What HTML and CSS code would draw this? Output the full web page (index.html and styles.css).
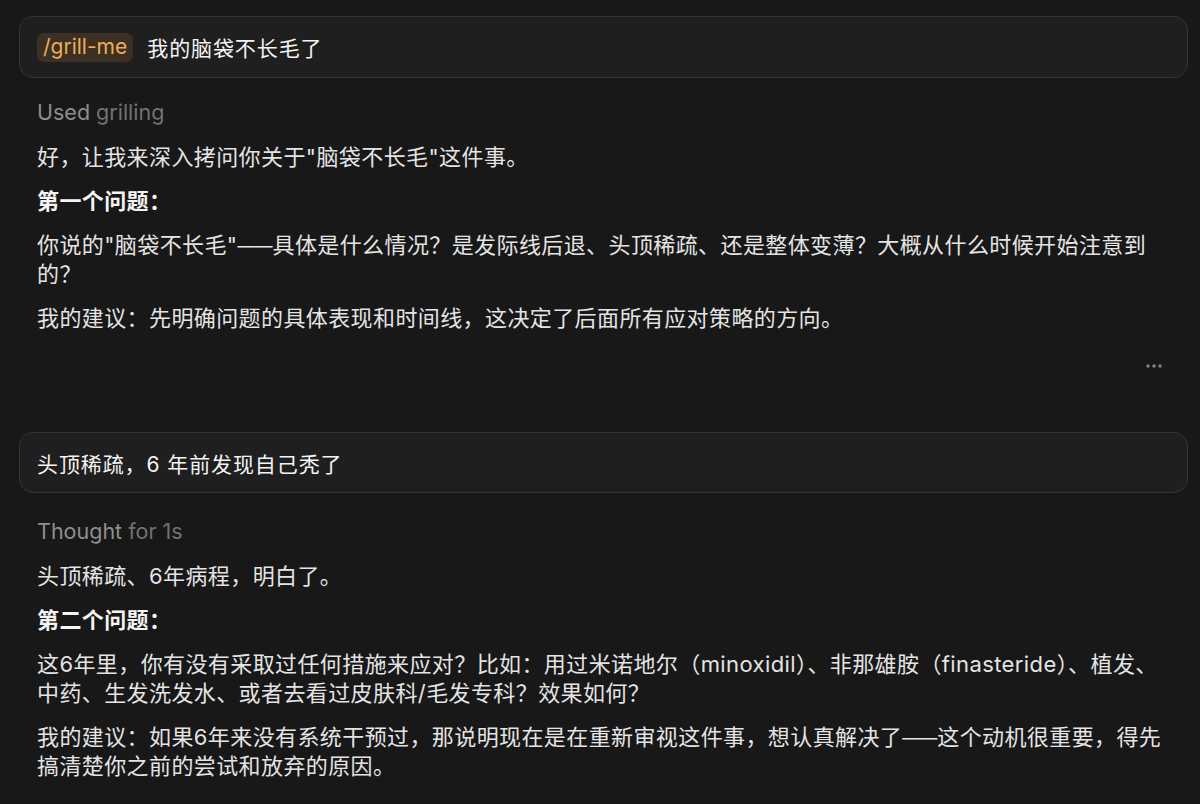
FILE: index.html
```html
<!DOCTYPE html>
<html lang="zh-CN">
<head>
  <meta charset="UTF-8">
  <meta name="viewport" content="width=device-width, initial-scale=1.0">
  <title>grill-me</title>
  <link rel="stylesheet" href="styles.css">
</head>
<body>
  <div class="thread">
    <!-- User turn -->
    <div class="user-msg">
      <span class="command-tag">/grill-me</span>
      <span class="user-text">我的脑袋不长毛了</span>
    </div>

    <!-- Assistant turn -->
    <div class="assistant-msg">
      <div class="status-line"><span class="status-verb">Used</span> <span class="status-detail">grilling</span></div>
      <p>好，让我来深入拷问你关于"脑袋不长毛"这件事。</p>
      <p class="heading">第一个问题：</p>
      <p>你说的"脑袋不长毛"<span class="dash">——</span>具体是什么情况？是发际线后退、头顶稀疏、还是整体变薄？大概从什么时候开始注意到的？</p>
      <p>我的建议：先明确问题的具体表现和时间线，这决定了后面所有应对策略的方向。</p>
      <div class="msg-actions">
        <button type="button" class="more-button" aria-label="More">
          <svg viewBox="0 0 18 6" xmlns="http://www.w3.org/2000/svg">
            <circle cx="3" cy="3" r="1.7" fill="currentColor"/>
            <circle cx="9" cy="3" r="1.7" fill="currentColor"/>
            <circle cx="15" cy="3" r="1.7" fill="currentColor"/>
          </svg>
        </button>
      </div>
    </div>

    <!-- User turn -->
    <div class="user-msg second">
      <span class="user-text">头顶稀疏，6 年前发现自己秃了</span>
    </div>

    <!-- Assistant turn -->
    <div class="assistant-msg thought">
      <div class="status-line"><span class="status-verb">Thought</span> <span class="status-detail">for 1s</span></div>
      <p>头顶稀疏、6年病程，明白了。</p>
      <p class="heading">第二个问题：</p>
      <p>这6年里，你有没有采取过任何措施来应对？比如：用过米诺地尔（minoxidil）、非那雄胺（finasteride）、植发、中药、生发洗发水、或者去看过皮肤科/毛发专科？效果如何？</p>
      <p>我的建议：如果6年来没有系统干预过，那说明现在是在重新审视这件事，想认真解决了<span class="dash">——</span>这个动机很重要，得先搞清楚你之前的尝试和放弃的原因。</p>
    </div>
  </div>
</body>
</html>
```

FILE: styles.css
```css
:root {
  --color-bg: #181818;
  --color-bubble: #1f1f1f;
  --color-border: #343434;
  --color-text: #e4e4e4;
  --color-text-strong: #f4f4f4;
  --color-muted: #8e8e8e;
  --color-muted-dark: #727272;
  --color-tag-bg: #3b3023;
  --color-tag-text: #eeac55;

  --font-primary: "Inter", "Noto Sans CJK SC", "Noto Sans", sans-serif;
}

* {
  box-sizing: border-box;
  margin: 0;
  padding: 0;
}

body {
  font-family: var(--font-primary);
  background-color: var(--color-bg);
  color: var(--color-text);
  -webkit-font-smoothing: antialiased;
  height: 100vh;
  overflow: hidden;
}

.thread {
  display: flex;
  flex-direction: column;
  padding: 16px 12px 0 19px;
}

/* User bubble */
.user-msg {
  display: flex;
  align-items: center;
  gap: 14px;
  height: 62px;
  padding: 0 17px;
  background-color: var(--color-bubble);
  border: 1px solid var(--color-border);
  border-radius: 14px;
  color: var(--color-text-strong);
}

.user-msg.second {
  height: 61px;
  margin-top: 19px;
}

.command-tag {
  display: inline-flex;
  align-items: center;
  height: 29px;
  padding: 0 6px 2px;
  border-radius: 7px;
  background-color: var(--color-tag-bg);
  color: var(--color-tag-text);
  font-size: 21px;
}

.user-text {
  font-size: 21px;
  letter-spacing: 0.9px;
}

/* Assistant reply */
.assistant-msg {
  padding: 20px 18px 0;
  font-size: 22px;
  letter-spacing: 0.4px;
  line-height: 29px;
}

.assistant-msg.thought {
  padding-top: 24px;
}

.status-line {
  font-size: 21.5px;
  letter-spacing: 0;
  margin-bottom: 16px;
}

.status-verb {
  color: var(--color-muted);
}

.status-detail {
  color: var(--color-muted-dark);
}

.assistant-msg p {
  margin-bottom: 15px;
}

.assistant-msg p.heading {
  font-weight: 700;
  color: var(--color-text-strong);
}

/* narrower double em dash */
.dash {
  font-size: 17.5px;
  letter-spacing: 0;
  vertical-align: 1px;
}

.msg-actions {
  display: flex;
  justify-content: flex-end;
  padding: 8px 7px 0 0;
  height: 65px;
}

.more-button {
  background: none;
  border: none;
  color: #858585;
  width: 18px;
  height: 20px;
  display: flex;
  align-items: center;
  cursor: pointer;
}

.more-button svg {
  width: 18px;
  height: 6px;
}
```
